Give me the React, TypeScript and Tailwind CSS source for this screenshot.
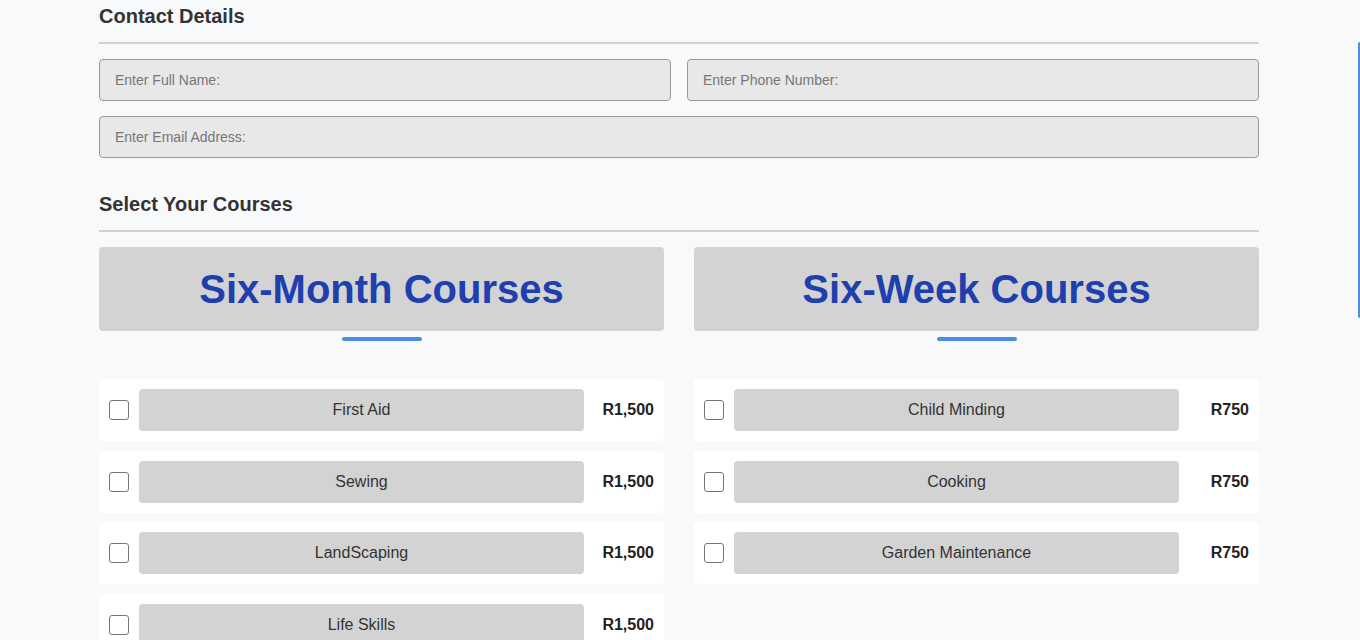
import React from "react";

const sixMonth = ["First Aid", "Sewing", "LandScaping", "Life Skills"];
const sixWeek = ["Child Minding", "Cooking", "Garden Maintenance"];

function Column({ title, items, price }: { title: string; items: string[]; price: string }) {
  return (
    <div className="flex flex-col">
      <div className="h-[84px] bg-[#d3d3d3] rounded-[4px] flex items-center justify-center">
        <h3 className="text-[40px] leading-[48px] font-bold text-[#1e40af]">{title}</h3>
      </div>
      <div className="mx-auto mt-[6px] w-[80px] h-[4px] rounded-full bg-[#4a8ee4]" />
      <div className="mt-[38px] flex flex-col gap-[9.67px]">
        {items.map((c) => (
          <div key={c} className="h-[62px] bg-white rounded-[4px] flex items-center px-[10px]">
            <div className="w-[20px] h-[20px] border border-[#767676] rounded-[3px] bg-white shrink-0" />
            <div className="ml-[10px] flex-1 h-[42px] bg-[#d3d3d3] rounded-[4px] flex items-center justify-center text-[16px] text-[#333]">
              {c}
            </div>
            <div className="w-[70px] text-right text-[16px] font-bold text-[#222]">{price}</div>
          </div>
        ))}
      </div>
    </div>
  );
}

export default function App() {
  return (
    <div className="min-h-[640px] bg-[#f8f9fb] font-['Liberation_Sans',Arial,sans-serif] overflow-hidden relative">
      <div className="w-[1160px] ml-[99px]">
        <h2 className="pt-[4px] text-[20px] leading-[24px] font-bold text-[#333]">Contact Details</h2>
        <div className="mt-[14px] h-[2px] bg-[#d0d0d0]" />
        <div className="mt-[15px] grid grid-cols-2 gap-x-[16px] gap-y-[15px]">
          <div className="h-[42px] bg-[#e8e8e8] border border-[#999] rounded-[4px] flex items-center px-[15px] text-[14px] text-[#777]">
            Enter Full Name:
          </div>
          <div className="h-[42px] bg-[#e8e8e8] border border-[#999] rounded-[4px] flex items-center px-[15px] text-[14px] text-[#777]">
            Enter Phone Number:
          </div>
          <div className="col-span-2 h-[42px] bg-[#e8e8e8] border border-[#999] rounded-[4px] flex items-center px-[15px] text-[14px] text-[#777]">
            Enter Email Address:
          </div>
        </div>
        <h2 className="mt-[34px] text-[20px] leading-[24px] font-bold text-[#333]">Select Your Courses</h2>
        <div className="mt-[14px] h-[2px] bg-[#d0d0d0]" />
        <div className="mt-[15px] grid grid-cols-2 gap-x-[30px] items-start">
          <Column title="Six-Month Courses" items={sixMonth} price="R1,500" />
          <Column title="Six-Week Courses" items={sixWeek} price="R750" />
        </div>
      </div>
      <div className="absolute right-0 top-[42px] w-[2px] h-[276px] bg-[#4a8ee4] rounded-l" />
    </div>
  );
}
